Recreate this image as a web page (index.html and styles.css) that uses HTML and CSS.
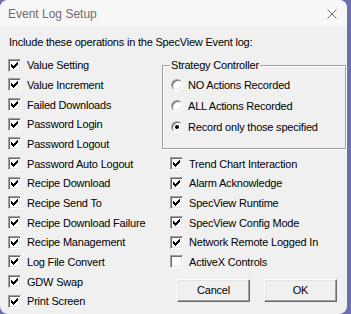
FILE: index.html
```html
<!DOCTYPE html>
<html lang="en">
<head>
  <meta charset="UTF-8">
  <title>Event Log Setup</title>
  <link rel="stylesheet" href="styles.css">
</head>
<body>
  <div class="dialog">
    <div class="titlebar">
      <span class="title">Event Log Setup</span>
      <svg class="close" width="10" height="10" viewBox="0 0 10 10">
        <path d="M0.5 0.5L9.5 9.5M9.5 0.5L0.5 9.5" stroke="#6f6f6f" stroke-width="1"/>
      </svg>
    </div>
    <div class="content">
      <p class="intro">Include these operations in the SpecView Event log:</p>
      <div class="columns">
        <div class="left">
          <label class="check on"><span class="box"></span>Value Setting</label>
          <label class="check on"><span class="box"></span>Value Increment</label>
          <label class="check on"><span class="box"></span>Failed Downloads</label>
          <label class="check on"><span class="box"></span>Password Login</label>
          <label class="check on"><span class="box"></span>Password Logout</label>
          <label class="check on"><span class="box"></span>Password Auto Logout</label>
          <label class="check on"><span class="box"></span>Recipe Download</label>
          <label class="check on"><span class="box"></span>Recipe Send To</label>
          <label class="check on"><span class="box"></span>Recipe Download Failure</label>
          <label class="check on"><span class="box"></span>Recipe Management</label>
          <label class="check on"><span class="box"></span>Log File Convert</label>
          <label class="check on"><span class="box"></span>GDW Swap</label>
          <label class="check on"><span class="box"></span>Print Screen</label>
        </div>
        <div class="right">
          <div class="group">
            <div class="group-label">Strategy Controller</div>
            <div class="radios">
              <label class="radio"><span class="dot"></span>NO Actions Recorded</label>
              <label class="radio"><span class="dot"></span>ALL Actions Recorded</label>
              <label class="radio on"><span class="dot"></span>Record only those specified</label>
            </div>
          </div>
          <div class="checks">
            <label class="check on"><span class="box"></span>Trend Chart Interaction</label>
            <label class="check on"><span class="box"></span>Alarm Acknowledge</label>
            <label class="check on"><span class="box"></span>SpecView Runtime</label>
            <label class="check on"><span class="box"></span>SpecView Config Mode</label>
            <label class="check on"><span class="box"></span>Network Remote Logged In</label>
            <label class="check"><span class="box"></span>ActiveX Controls</label>
          </div>
          <div class="buttons">
            <button>Cancel</button>
            <button>OK</button>
          </div>
        </div>
      </div>
    </div>
  </div>
</body>
</html>
```

FILE: styles.css
```css
body {
  margin: 0;
  width: 351px;
  height: 314px;
  background: #6a6fb2;
  overflow: hidden;
}
.dialog {
  width: 347px;
  height: 314px;
  background: #f0f0f0;
  border-radius: 8px;
  overflow: hidden;
  font-family: "Liberation Sans", Arial, sans-serif;
  font-size: 11px;
  letter-spacing: -0.2px;
  color: #000;
}
.titlebar {
  height: 26px;
  background: #f7f7f7;
  display: flex;
  align-items: center;
  justify-content: space-between;
  padding: 0 10px 0 8px;
}
.title {
  font-size: 12px;
  letter-spacing: 0;
  color: #6e6e6e;
  margin-top: 1px;
}
.close {
  margin-top: 1px;
}
.content {
  padding-left: 8px;
}
.intro {
  margin: 10px 0 6.5px 1px;
  line-height: 13px;
}
.columns {
  display: flex;
}
.left {
  width: 154px;
  display: flex;
  flex-direction: column;
}
.check {
  height: 19.67px;
  display: flex;
  align-items: center;
  gap: 6px;
  white-space: nowrap;
}
.box {
  width: 13px;
  height: 13px;
  box-sizing: border-box;
  border: 1px solid;
  border-color: #a0a0a0 #fff #fff #a0a0a0;
  box-shadow: inset 1px 1px #696969, inset -1px -1px #e3e3e3;
  background: #fff;
  flex: none;
}
.check.on .box {
  background: #fff url("data:image/svg+xml,%3Csvg xmlns='http://www.w3.org/2000/svg' width='11' height='11' viewBox='1 1 11 11'%3E%3Cpath d='M3 5H4V6H5V7H6V6H7V5H8V4H9V3H10V6H9V7H8V8H7V9H6V10H5V9H4V8H3Z' fill='%23000'/%3E%3C/svg%3E") no-repeat 0 0;
}
.right {
  width: 184px;
  display: flex;
  flex-direction: column;
}
.group {
  height: 84px;
  box-sizing: border-box;
  margin: 9.5px 0 4.85px;
  border: 1px solid #a0a0a0;
  box-shadow: inset 1px 1px #fff, 1px 1px #fff;
}
.group-label {
  width: fit-content;
  margin: -7px 0 0 7px;
  padding: 0 1px;
  line-height: 13px;
  background: #f0f0f0;
}
.radios {
  margin-top: 2px;
  padding-left: 8px;
}
.radio {
  height: 21px;
  display: flex;
  align-items: center;
  gap: 5px;
}
.dot {
  width: 12px;
  height: 12px;
  box-sizing: border-box;
  border-radius: 50%;
  border: 1px solid;
  border-color: #a0a0a0 #fff #fff #a0a0a0;
  box-shadow: inset 1px 1px #696969, inset -1px -1px #e3e3e3;
  background: #fff;
  display: flex;
  align-items: center;
  justify-content: center;
  flex: none;
}
.radio.on .dot::after {
  content: "";
  width: 4px;
  height: 4px;
  border-radius: 50%;
  background: #000;
}
.checks {
  padding-left: 8px;
  display: flex;
  flex-direction: column;
}
.buttons {
  display: flex;
  gap: 14px;
  margin: 7px 0 0 15px;
}
.buttons button {
  width: 73px;
  height: 23px;
  padding: 0;
  font: inherit;
  letter-spacing: inherit;
  color: #000;
  background: #f0f0f0;
  border: 1px solid;
  border-color: #fff #696969 #696969 #fff;
  box-shadow: inset -1px -1px #a0a0a0, inset 1px 1px #e3e3e3;
}
```
